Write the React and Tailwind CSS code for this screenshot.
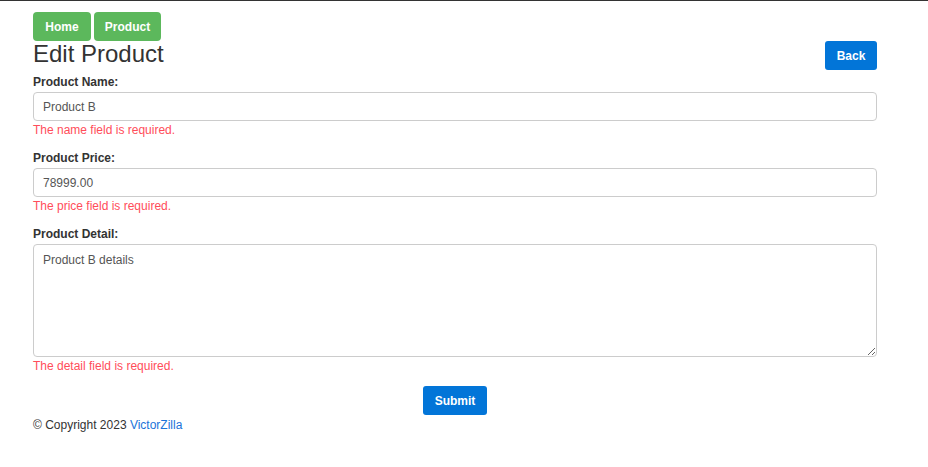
import React, { useState } from "react";

const Field = ({ label, value, error, multiline, onChange }) => (
	<div className="flex flex-col">
		<label className="text-[12px] leading-[16px] font-bold text-[#333] mb-[2px]">{label}</label>
		{multiline ? (
			<textarea
				value={value}
				onChange={onChange}
				className="h-[113px] w-full border border-[#ccc] rounded-[4px] px-[9px] py-[7px] text-[12px] leading-[16px] text-[#555] outline-none resize-y"
			/>
		) : (
			<input
				value={value}
				onChange={onChange}
				className="h-[29px] w-full border border-[#ccc] rounded-[4px] px-[9px] text-[12px] text-[#555] outline-none"
			/>
		)}
		<div className="text-[12px] leading-[16px] text-[#ff4d5a] mt-[1px]">{error}</div>
	</div>
);

const App = () => {
	const [name, setName] = useState("Product B");
	const [price, setPrice] = useState("78999.00");
	const [detail, setDetail] = useState("Product B details");

	return (
		<div className="min-h-screen bg-white border-t border-[#333] font-['Liberation_Sans',Arial,sans-serif] text-[#333]">
			<div className="ml-[33px] w-[844px] pt-[11px]">
				{/* Nav */}
				<div className="flex gap-[3px]">
					<button className="h-[29px] w-[58px] bg-[#5cb85c] text-white text-[12px] font-bold rounded-[4px]">Home</button>
					<button className="h-[29px] w-[67px] bg-[#5cb85c] text-white text-[12px] font-bold rounded-[4px]">Product</button>
				</div>
				{/* Title row */}
				<div className="flex justify-between items-start">
					<h2 className="text-[24px] leading-[26px] text-[#333]">Edit Product</h2>
					<button className="h-[29px] w-[52px] bg-[#0275d8] text-white text-[12px] font-bold rounded-[3px]">Back</button>
				</div>
				{/* Form */}
				<form className="flex flex-col gap-[12px] mt-[4px]" onSubmit={(e) => e.preventDefault()}>
					<Field label="Product Name:" value={name} onChange={(e) => setName(e.target.value)} error="The name field is required." />
					<Field label="Product Price:" value={price} onChange={(e) => setPrice(e.target.value)} error="The price field is required." />
					<Field label="Product Detail:" value={detail} onChange={(e) => setDetail(e.target.value)} multiline error="The detail field is required." />
					<div className="flex justify-center">
						<button type="submit" className="h-[29px] w-[64px] bg-[#0275d8] text-white text-[12px] font-bold rounded-[3px]">Submit</button>
					</div>
				</form>
				<div className="text-[12px] leading-[16px] text-[#333] mt-[2px]">
					© Copyright 2023 <a href="#" className="text-[#1a73d9]">VictorZilla</a>
				</div>
			</div>
		</div>
	);
};

export default App;
